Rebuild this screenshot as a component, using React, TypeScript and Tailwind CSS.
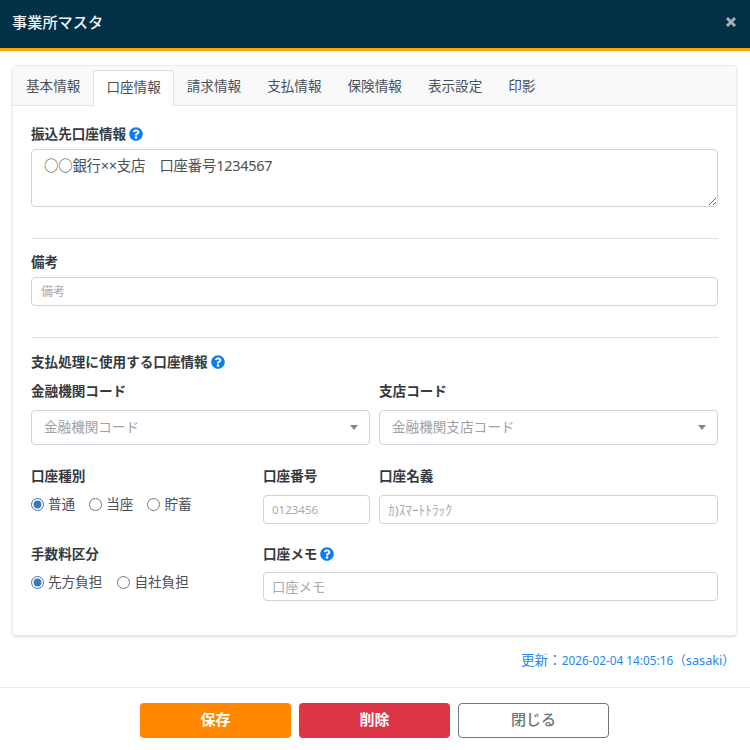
const tabs = ['基本情報', '口座情報', '請求情報', '支払情報', '保険情報', '表示設定', '印影']

const inputClass =
  'block w-full rounded-[4px] border border-[#ced4da] bg-white text-[#495057] outline-none placeholder:text-[#a8abae]'

function HelpIcon() {
  return (
    <svg width="14" height="14" viewBox="0 0 512 512" className="shrink-0">
      <path
        fill="#0d7bf2"
        d="M504 256c0 137-111 248-248 248S8 393 8 256 119 8 256 8s248 111 248 248zM262.700 90c-54.500 0-89.300 23-116.500 63.800-3.500 5.300-2.400 12.400 2.700 16.300l34.700 26.300c5.200 3.900 12.600 3 16.700-2.100 17.900-22.700 30.100-35.800 57.300-35.800 20.400 0 45.700 13.100 45.700 33 0 15-12.400 22.700-32.600 34-23.600 13.200-54.800 29.700-54.800 70.900V300c0 6.600 5.400 12 12 12h56c6.600 0 12-5.400 12-12v-1.300c0-28.500 83.300-29.700 83.300-106.900 0-58.100-60.300-101.800-116.500-101.800zM256 338c-25.400 0-46 20.600-46 46 0 25.400 20.600 46 46 46s46-20.600 46-46c0-25.400-20.600-46-46-46z"
      />
    </svg>
  )
}

function Label({ text, help, className }: { text: string; help?: boolean; className?: string }) {
  return (
    <div className={`flex h-[20px] items-center gap-[3px] text-[13.600px] leading-[20px] font-bold text-[#343a40] ${className ?? ''}`}>
      <span>{text}</span>
      {help && <HelpIcon />}
    </div>
  )
}

function Radio({ name, text, checked }: { name: string; text: string; checked?: boolean }) {
  return (
    <label className="flex items-center gap-[4px] text-[13.600px] leading-[20px] text-[#495057]">
      <input
        type="radio"
        name={name}
        defaultChecked={checked}
        className="m-0 h-[13px] w-[13px] accent-[#3b78b5]"
      />
      <span>{text}</span>
    </label>
  )
}

function SelectBox({ text }: { text: string }) {
  return (
    <div className="flex h-[35px] items-center justify-between rounded-[4px] border border-[#ced4da] bg-white pr-[11px] pl-[12px] text-[13.600px] text-[#9fa2a5]">
      <span className="-mt-[1px]">{text}</span>
      <svg width="8" height="5" viewBox="0 0 8 5" className="-mt-[1px]">
        <path d="M0 0h8L4 5z" fill="#888888" />
      </svg>
    </div>
  )
}

export default function App() {
  return (
    <div
      className="flex h-[750px] w-[750px] flex-col overflow-hidden bg-white"
      style={{ fontFamily: '"Noto Sans", "Noto Sans CJK JP", sans-serif' }}
    >
      <header className="flex h-[51px] shrink-0 items-center justify-between border-b-[3px] border-[#f5ab00] bg-[#023047] pr-[13px] pb-[4px] pl-[12px]">
        <h1 className="text-[15.200px] font-medium text-[#f1f1f1]">事業所マスタ</h1>
        <svg width="12" height="12" viewBox="0 0 12 12">
          <path d="M2 2l8 8M10 2l-8 8" stroke="#a3b1ba" strokeWidth="3" />
        </svg>
      </header>

      <div className="mt-[14px] mr-[13px] ml-[12px] h-[571px] shrink-0 overflow-hidden rounded-[4px] border border-[#e9ecef] shadow-[0_1px_2px_rgba(0,0,0,0.15)]">
        <nav className="flex h-[40px] items-end border-b border-[#dee2e6] bg-[#f8f9fa]">
          {tabs.map((tab, i) => (
            <div
              key={tab}
              className={
                i === 1
                  ? '-mb-px flex h-[36px] items-center justify-center rounded-t-[4px] border border-b-0 border-[#dee2e6] bg-white px-[12px] pb-[3px] text-[13.600px] text-[#495057]'
                  : 'flex h-[36px] items-center justify-center px-[13px] pb-[1px] text-[13.600px] text-[#495057]'
              }
            >
              {tab}
            </div>
          ))}
        </nav>

        <div className="px-[18px] pt-[18px]">
          <Label text="振込先口座情報" help />
          <textarea
            defaultValue="○○銀行××支店　口座番号1234567"
            className={`${inputClass} mt-[5px] h-[58px] px-[12px] py-[6px] text-[14.400px] leading-[20px] tracking-[-0.2px] text-[#5a6268]`}
          />
          <hr className="mt-[31px] border-[#dee2e6]" />

          <Label text="備考" className="mt-[13px]" />
          <input placeholder="備考" className={`${inputClass} mt-[5px] h-[29px] px-[9px] text-[12px]`} />
          <hr className="mt-[31px] border-[#dee2e6]" />

          <Label text="支払処理に使用する口座情報" help className="mt-[14px]" />

          <div className="mt-[9px] grid grid-cols-2 gap-x-[9px]">
            <div>
              <Label text="金融機関コード" />
              <div className="mt-[9px]">
                <SelectBox text="金融機関コード" />
              </div>
            </div>
            <div>
              <Label text="支店コード" />
              <div className="mt-[9px]">
                <SelectBox text="金融機関支店コード" />
              </div>
            </div>
          </div>

          <div className="mt-[21px] grid grid-cols-[223px_107px_339px] gap-x-[9px]">
            <div>
              <Label text="口座種別" />
              <div className="mt-[8px] flex gap-[14px]">
                <Radio name="kind" text="普通" checked />
                <Radio name="kind" text="当座" />
                <Radio name="kind" text="貯蓄" />
              </div>
            </div>
            <div>
              <Label text="口座番号" />
              <input placeholder="0123456" className={`${inputClass} mt-[9px] h-[29px] px-[8px] text-[11.500px]`} />
            </div>
            <div>
              <Label text="口座名義" />
              <input placeholder="ｶ)ｽﾏｰﾄﾄﾗｯｸ" className={`${inputClass} mt-[9px] h-[29px] px-[8px] text-[13.300px]`} />
            </div>
          </div>

          <div className="mt-[20px] grid grid-cols-[223px_1fr] gap-x-[9px]">
            <div>
              <Label text="手数料区分" />
              <div className="mt-[8px] flex gap-[15px]">
                <Radio name="fee" text="先方負担" checked />
                <Radio name="fee" text="自社負担" />
              </div>
            </div>
            <div>
              <Label text="口座メモ" help />
              <input placeholder="口座メモ" className={`${inputClass} mt-[8px] h-[29px] px-[8px] text-[13.300px]`} />
            </div>
          </div>
        </div>
      </div>

      <p className="mt-[14px] pr-[15px] text-right text-[11.800px] leading-[20px] text-[#1e86f5]">
        <span className="text-[13.600px]">更新：</span>2026-02-04 14:05:16<span className="text-[12.700px]">（sasaki）</span>
      </p>

      <footer className="mt-[17px] flex justify-center gap-[8px] border-t border-[#e9ecef] pt-[15px] pr-[1px]">
        <button className="h-[35px] w-[151px] rounded-[4px] bg-[#ff8800] pb-[2px] text-[15px] font-bold text-[#fff]">保存</button>
        <button className="h-[35px] w-[151px] rounded-[4px] bg-[#dc3545] pb-[2px] text-[15px] font-bold text-[#fff]">削除</button>
        <button className="h-[35px] w-[151px] rounded-[4px] border border-[#6c757d] bg-white pb-[2px] text-[15px] font-medium text-[#6c757d]">閉じる</button>
      </footer>
    </div>
  )
}
